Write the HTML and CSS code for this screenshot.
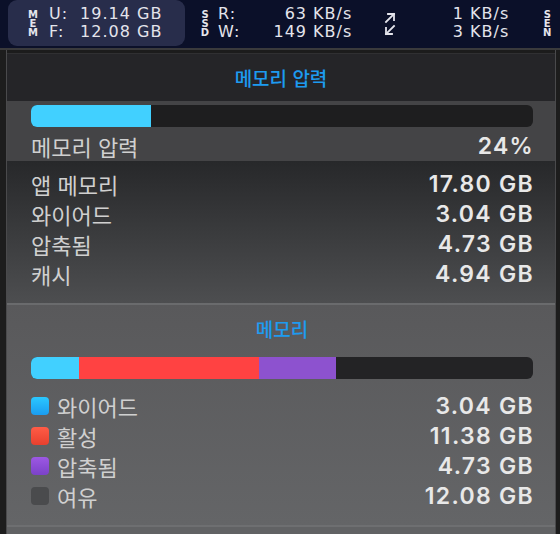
FILE: index.html
```html
<!DOCTYPE html>
<html lang="ko">
<head>
<meta charset="utf-8">
<link rel="stylesheet" href="styles.css">
</head>
<body>
<div class="menubar">
  <div class="module mem">
    <div class="vlabel"><span>M</span><span>E</span><span>M</span></div>
    <div class="keys"><span>U:</span><span>F:</span></div>
    <div class="vals mem-vals"><span>19.14 GB</span><span>12.08 GB</span></div>
  </div>
  <div class="module ssd">
    <div class="vlabel"><span>S</span><span>S</span><span>D</span></div>
    <div class="keys"><span>R:</span><span>W:</span></div>
    <div class="vals ssd-vals"><span>63 KB/s</span><span>149 KB/s</span></div>
  </div>
  <div class="module net">
    <svg class="arrows" width="14" height="26" viewBox="0 0 14 26">
      <g fill="none" stroke="#e4e4ec" stroke-width="1.8" stroke-linecap="square">
        <path d="M3 11 L11 3"/><path d="M5 3 H11 V9"/>
        <path d="M11 15 L3 23"/><path d="M3 17 V23 H9"/>
      </g>
    </svg>
    <div class="vals net-vals"><span>1 KB/s</span><span>3 KB/s</span></div>
  </div>
  <div class="module sen">
    <div class="vlabel"><span>S</span><span>E</span><span>N</span></div>
  </div>
</div>
<div class="stage">
  <div class="side"></div>
  <div class="popup">
    <div class="title-sec"><div class="title">메모리 압력</div></div>
    <div class="pressure-sec">
      <div class="bar"><div class="seg cyan" style="width:24%"></div></div>
      <div class="row"><span class="label">메모리 압력</span><span class="value">24%</span></div>
    </div>
    <div class="details-sec">
      <div class="row"><span class="label">앱 메모리</span><span class="value">17.80 GB</span></div>
      <div class="row"><span class="label">와이어드</span><span class="value">3.04 GB</span></div>
      <div class="row"><span class="label">압축됨</span><span class="value">4.73 GB</span></div>
      <div class="row"><span class="label">캐시</span><span class="value">4.94 GB</span></div>
    </div>
    <div class="memory-sec">
      <div class="title mem-title">메모리</div>
      <div class="bar mem-bar">
        <div class="seg cyan" style="width:9.6%"></div>
        <div class="seg red" style="width:35.9%"></div>
        <div class="seg purple" style="width:15.2%"></div>
      </div>
      <div class="legend">
        <div class="row"><span class="label"><i class="sw sw-cyan"></i>와이어드</span><span class="value">3.04 GB</span></div>
        <div class="row"><span class="label"><i class="sw sw-red"></i>활성</span><span class="value">11.38 GB</span></div>
        <div class="row"><span class="label"><i class="sw sw-purple"></i>압축됨</span><span class="value">4.73 GB</span></div>
        <div class="row"><span class="label"><i class="sw sw-grey"></i>여유</span><span class="value">12.08 GB</span></div>
      </div>
    </div>
    <div class="bottom-sec"></div>
  </div>
  <div class="side-r"></div>
</div>
</body>
</html>
```
FILE: styles.css
```css
* { box-sizing: border-box; }
html, body { margin: 0; padding: 0; }
body {
  width: 560px;
  height: 534px;
  overflow: hidden;
  background: #1c1c1c;
  font-family: "Inter", "Noto Sans CJK KR", sans-serif;
}
.menubar {
  background: #0b1029;
  display: flex;
  align-items: stretch;
  color: #e4e4ec;
  border-bottom: 2px solid #3a3a3c;
  height: 50px;
}
.module {
  display: flex;
  align-items: center;
  height: 46px;
}
.mem {
  margin-left: 8px;
  width: 177px;
  background: #282d4b;
  border-radius: 9px;
  padding-left: 20px;
}
.vlabel {
  display: flex;
  flex-direction: column;
  align-items: center;
  width: 10px;
  font-family: "DejaVu Sans", sans-serif;
  font-weight: bold;
  font-size: 10px;
  line-height: 9px;
  color: #e4e4ec;
}
.keys, .vals {
  display: flex;
  flex-direction: column;
  font-family: "DejaVu Sans", sans-serif;
  font-size: 16px;
  line-height: 18px;
  letter-spacing: 1px;
}
.keys { margin-left: 11px; }
.mem-vals { margin-left: 12px; }
.ssd { margin-left: 15px; }
.ssd .keys { margin-left: 8px; }
.ssd-vals { width: 112px; align-items: flex-end; }
.net { margin-left: 31px; }
.arrows { display: block; margin-top: 2px; }
.net-vals { width: 112px; align-items: flex-end; }
.sen { margin-left: 33px; }

.stage {
  display: flex;
  height: 484px;
}
.side {
  width: 7px;
  background: #1d1d1d;
  border-right: 1px solid #4a4a4c;
}
.side-r {
  width: 5px;
  background: #1d1d1d;
  border-left: 1px solid #4a4a4c;
}
.popup {
  flex: 1;
  margin-top: 3px;
  display: flex;
  flex-direction: column;
  border-top: 1px solid #303032;
}
.title-sec {
  height: 47px;
  background: #252528;
  display: flex;
  align-items: center;
  justify-content: center;
}
.title {
  color: #1d9bf0;
  font-family: "Noto Sans CJK KR", sans-serif;
  font-size: 19px;
  font-weight: 500;
  text-align: center;
  line-height: 30px;
}
.pressure-sec {
  background: #444446;
  padding: 4px 22px 0 24px;
  height: 60px;
}
.bar {
  height: 22px;
  border-radius: 6px;
  background: #1e1e1f;
  overflow: hidden;
  display: flex;
}
.seg { height: 100%; }
.cyan { background: #41d0ff; }
.red { background: #ff4242; }
.purple { background: #8d52cf; }
.row {
  display: flex;
  justify-content: space-between;
  align-items: center;
  height: 30px;
}
.pressure-sec .row { margin-top: 4px; }
.label {
  display: flex;
  align-items: center;
  font-family: "Noto Sans CJK KR", sans-serif;
  font-size: 22px;
  color: #d0d0d0;
}
.value {
  font-family: "Inter", sans-serif;
  font-weight: 600;
  font-size: 23px;
  letter-spacing: 1.3px;
  margin-right: -1px;
  color: #e8e8e8;
}
.details-sec {
  background: linear-gradient(180deg, #27282a 0%, #4d4e50 100%);
  padding: 8px 22px 14px 24px;
  border-bottom: 2px solid #6a6b6d;
}
.memory-sec {
  background: linear-gradient(180deg, #59595b 0%, #646567 100%);
  padding: 9px 22px 14px 24px;
  border-bottom: 2px solid #6e6f71;
}
.mem-bar { margin-top: 13px; background: #232325; }
.legend { margin-top: 12px; }
.sw {
  display: inline-block;
  width: 18px;
  height: 18px;
  border-radius: 4px;
  margin-right: 8px;
}
.sw-cyan { background: linear-gradient(180deg, #2bc8ff, #1a9cf0); }
.sw-red { background: linear-gradient(180deg, #ff5c46, #e8402e); }
.sw-purple { background: linear-gradient(180deg, #9d58e4, #7b42c8); }
.sw-grey { background: #4a4b4d; }
.bottom-sec {
  flex: 1;
  background: #616264;
}
```
